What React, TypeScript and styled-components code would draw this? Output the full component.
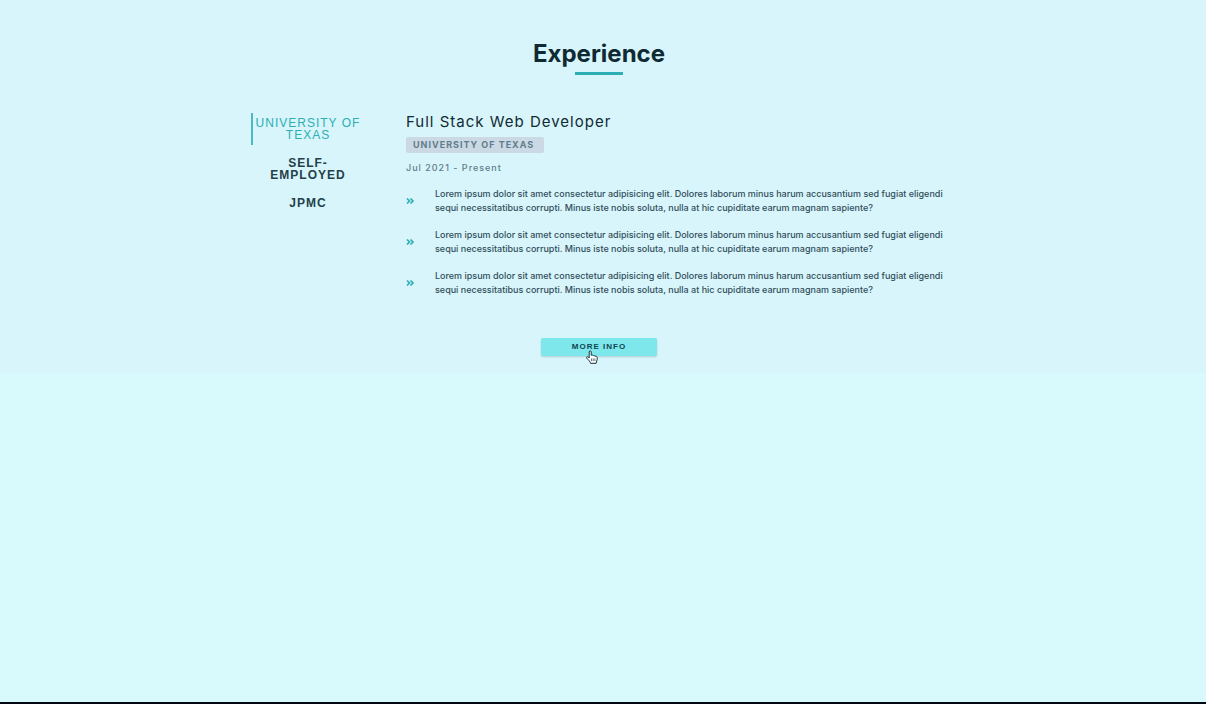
import React, { useState } from "react";
import styled, { createGlobalStyle } from "styled-components";

const GlobalStyle = createGlobalStyle`
  * { box-sizing: border-box; }
  body {
    margin: 0;
    background: #d8fafd;
    color: #102a33;
    font-family: Inter, "Liberation Sans", sans-serif;
  }
`;

const Page = styled.div`
  min-height: 100vh;
  display: flex;
  flex-direction: column;
  border-bottom: 2px solid #000814;
`;

const Section = styled.section`
  display: flex;
  flex-direction: column;
  align-items: center;
  padding: 38px 8px 17px 0;
  background: #d7f5fa;
`;

const Title = styled.h2`
  margin: 0;
  font-size: 24px;
  line-height: 32px;
  font-weight: 700;
`;

const Underline = styled.div`
  width: 48px;
  height: 3px;
  margin-top: 2px;
  background: #2caeb4;
`;

const Jobs = styled.div`
  width: 100%;
  max-width: 696px;
  margin-top: 38px;
  display: grid;
  grid-template-columns: 112px 1fr;
  column-gap: 43px;
  align-items: start;
`;

const Tabs = styled.div`
  display: flex;
  flex-direction: column;
  gap: 8px;
`;

const Tab = styled.button<{ $active: boolean }>`
  padding: 4px 0;
  border: 0;
  border-left: 2px solid ${(p) => (p.$active ? "#4bb9be" : "transparent")};
  background: transparent;
  color: ${(p) => (p.$active ? "#2caeb4" : "#24414a")};
  font-family: "Liberation Sans", sans-serif;
  font-size: 12px;
  line-height: 12px;
  font-weight: ${(p) => (p.$active ? 400 : 700)};
  letter-spacing: 1px;
  text-transform: uppercase;
  cursor: pointer;
`;

const Role = styled.h3`
  margin: 0;
  font-size: 15px;
  line-height: 18px;
  font-weight: 400;
  letter-spacing: 1px;
`;

const Company = styled.h4`
  width: fit-content;
  margin: 6px 0 0;
  padding: 0 10px 0 7px;
  border-radius: 2px;
  background: #cbd9e4;
  color: #617d8b;
  font-size: 9px;
  line-height: 16px;
  font-weight: 700;
  letter-spacing: 1px;
  text-transform: uppercase;
`;

const Dates = styled.p`
  margin: 8px 0 0;
  color: #617d8b;
  font-size: 9px;
  line-height: 14px;
  font-weight: 500;
  letter-spacing: 1px;
`;

const Duties = styled.ul`
  display: grid;
  row-gap: 13px;
  margin: 12px 0 0;
  padding: 0;
  list-style: none;
`;

const Duty = styled.li`
  display: grid;
  grid-template-columns: 9px 1fr;
  column-gap: 20px;
  align-items: center;
  color: #324d5a;
  font-size: 9px;
  line-height: 14px;
  font-weight: 500;
`;

const Chevrons = styled.svg`
  width: 9px;
  height: 8px;
  fill: none;
  stroke: #2caeb4;
  stroke-width: 1.7;
`;

const MoreInfo = styled.button`
  position: relative;
  width: 116px;
  height: 18px;
  margin-top: 41px;
  padding: 0;
  border: 0;
  border-radius: 2px;
  background: #7ee7eb;
  box-shadow: 0 1px 2px rgba(0, 50, 60, 0.2);
  color: #0b4650;
  font-family: "Liberation Sans", sans-serif;
  font-size: 8px;
  line-height: 18px;
  font-weight: 700;
  letter-spacing: 1px;
  text-transform: uppercase;
  cursor: pointer;
`;

const Pointer = styled.svg`
  position: absolute;
  left: 45px;
  top: 12px;
  width: 12px;
  height: 14px;
`;

const duty =
  "Lorem ipsum dolor sit amet consectetur adipisicing elit. Dolores laborum minus harum accusantium sed fugiat eligendi sequi necessitatibus corrupti. Minus iste nobis soluta, nulla at hic cupiditate earum magnam sapiente?";

const companies = ["University of Texas", "Self-Employed", "JPMC"];

export default function App() {
  const [current, setCurrent] = useState(0);

  return (
    <Page>
      <GlobalStyle />
      <Section>
        <Title>Experience</Title>
        <Underline />
        <Jobs>
          <Tabs>
            {companies.map((name, i) => (
              <Tab key={name} $active={i === current} onClick={() => setCurrent(i)}>
                {name}
              </Tab>
            ))}
          </Tabs>
          <article>
            <Role>Full Stack Web Developer</Role>
            <Company>{companies[current]}</Company>
            <Dates>Jul 2021 - Present</Dates>
            <Duties>
              {[0, 1, 2].map((n) => (
                <Duty key={n}>
                  <Chevrons viewBox="0 0 9 8" aria-hidden="true">
                    <path d="M1 1.500l2.500 2.500-2.500 2.500M4.500 1.500l2.500 2.500-2.500 2.500" />
                  </Chevrons>
                  <span>{duty}</span>
                </Duty>
              ))}
            </Duties>
          </article>
        </Jobs>
        <MoreInfo>
          More Info
          <Pointer viewBox="0 0 12 14" aria-hidden="true">
            <path
              d="M3.200 8V2c0-1.600 2-1.600 2 0v3.400c.4-.7 1.700-.6 1.900.3.6-.5 1.600-.2 1.800.6.8-.4 2.300.1 2.300 1.100v2.200c0 1-1.100 2-1.100 3.700H4.600C4.500 11.800 2.300 9.900.8 8.200c-.9-1.100.5-2.200 1.400-1.200z"
              fill="#fff"
              stroke="#17333c"
              strokeWidth="1"
              strokeLinejoin="round"
            />
            <path d="M5.500 8.500v2.500M7.200 8.500v2.500M8.900 8.500v2.500" stroke="#17333c" strokeWidth=".7" />
          </Pointer>
        </MoreInfo>
      </Section>
    </Page>
  );
}
